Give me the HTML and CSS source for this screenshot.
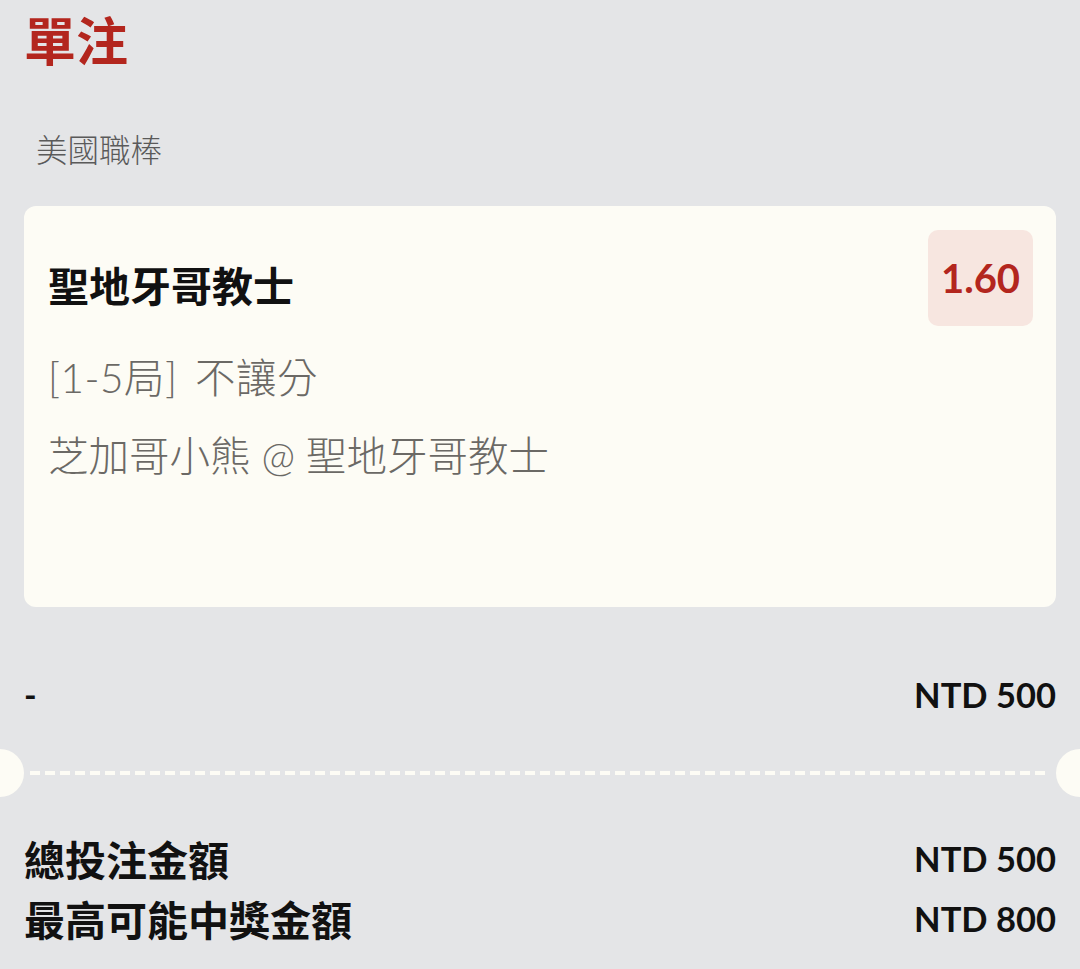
FILE: index.html
```html
<!DOCTYPE html>
<html lang="zh-Hant">
<head>
<meta charset="utf-8">
<title>單注</title>
<link rel="stylesheet" href="styles.css">
</head>
<body>
<main class="slip">
  <h1 class="slip-title">單注</h1>
  <div class="league">美國職棒</div>
  <section class="bet-card">
    <div class="bet-info">
      <div class="bet-pick">聖地牙哥教士</div>
      <div class="bet-market">[1-5局] 不讓分</div>
      <div class="bet-match">芝加哥小熊 @ 聖地牙哥教士</div>
    </div>
    <div class="odds">1.60</div>
  </section>
  <div class="row stake-row">
    <span class="stake-label">-</span>
    <span class="amount">NTD 500</span>
  </div>
  <div class="separator">
    <span class="notch notch-left"></span>
    <span class="dash-line"></span>
    <span class="notch notch-right"></span>
  </div>
  <div class="totals">
    <div class="row total-row">
      <span class="total-label">總投注金額</span>
      <span class="amount">NTD 500</span>
    </div>
    <div class="row total-row">
      <span class="total-label">最高可能中獎金額</span>
      <span class="amount">NTD 800</span>
    </div>
  </div>
</main>
</body>
</html>
```

FILE: styles.css
```css
html, body {
  margin: 0;
  padding: 0;
  background: #e4e5e7;
}
body {
  font-family: Lato, "Noto Sans CJK TC", sans-serif;
  color: #111;
}
.slip {
  padding: 7px 24px 0 24px;
}
.slip-title {
  margin: 0;
  font-size: 52px;
  line-height: 64px;
  font-weight: 700;
  color: #b3261e;
  font-family: "Noto Sans CJK TC", sans-serif;
}
.league {
  margin-top: 57px;
  padding-left: 12px;
  font-size: 31.5px;
  line-height: 40px;
  font-weight: 300;
  color: #5a5a5a;
  font-family: "Noto Sans CJK TC", sans-serif;
}
.bet-card {
  margin-top: 38px;
  background: #fdfcf5;
  border-radius: 12px;
  min-height: 401px;
  box-sizing: border-box;
  padding: 24px 23px 24px 24px;
  display: flex;
  justify-content: space-between;
  align-items: flex-start;
}
.bet-info {
  padding-top: 26px;
}
.bet-pick {
  font-family: "Noto Sans CJK TC", sans-serif;
  font-size: 41px;
  line-height: 56px;
  font-weight: 700;
  color: #111;
}
.bet-market, .bet-match {
  font-family: Lato, "Noto Sans CJK TC", sans-serif;
  font-size: 40.5px;
  line-height: 56px;
  font-weight: 300;
  color: #6b6965;
}
.bet-market {
  margin-top: 38px;
  word-spacing: 6px;
  letter-spacing: 0.5px;
}
.bet-match {
  margin-top: 22px;
}
.odds {
  width: 105px;
  height: 96px;
  border-radius: 10px;
  background: #f7e6e0;
  color: #b3261e;
  font-family: Lato, sans-serif;
  font-weight: 700;
  font-size: 40px;
  display: flex;
  align-items: center;
  justify-content: center;
}
.row {
  display: flex;
  justify-content: space-between;
  align-items: center;
}
.stake-row {
  margin-top: 63px;
  height: 48px;
}
.stake-label {
  font-family: Lato, sans-serif;
  font-weight: 700;
  font-size: 34px;
}
.amount {
  font-family: Lato, sans-serif;
  font-weight: 700;
  font-size: 34.5px;
  color: #111;
}
.separator {
  margin: 31px -24px 0 -24px;
  display: flex;
  align-items: center;
  height: 48px;
}
.notch {
  width: 24px;
  height: 48px;
  background: #fdfcf5;
  flex: none;
}
.notch-left {
  border-radius: 0 24px 24px 0;
}
.notch-right {
  border-radius: 24px 0 0 24px;
}
.dash-line {
  flex: 1;
  height: 4px;
  margin: 0 6px;
  background: repeating-linear-gradient(to right, #fdfcf5 0 10px, transparent 10px 15px);
}
.totals {
  margin-top: 31px;
}
.total-row {
  height: 60px;
}
.total-label {
  font-family: "Noto Sans CJK TC", sans-serif;
  font-weight: 700;
  font-size: 41px;
}
```
